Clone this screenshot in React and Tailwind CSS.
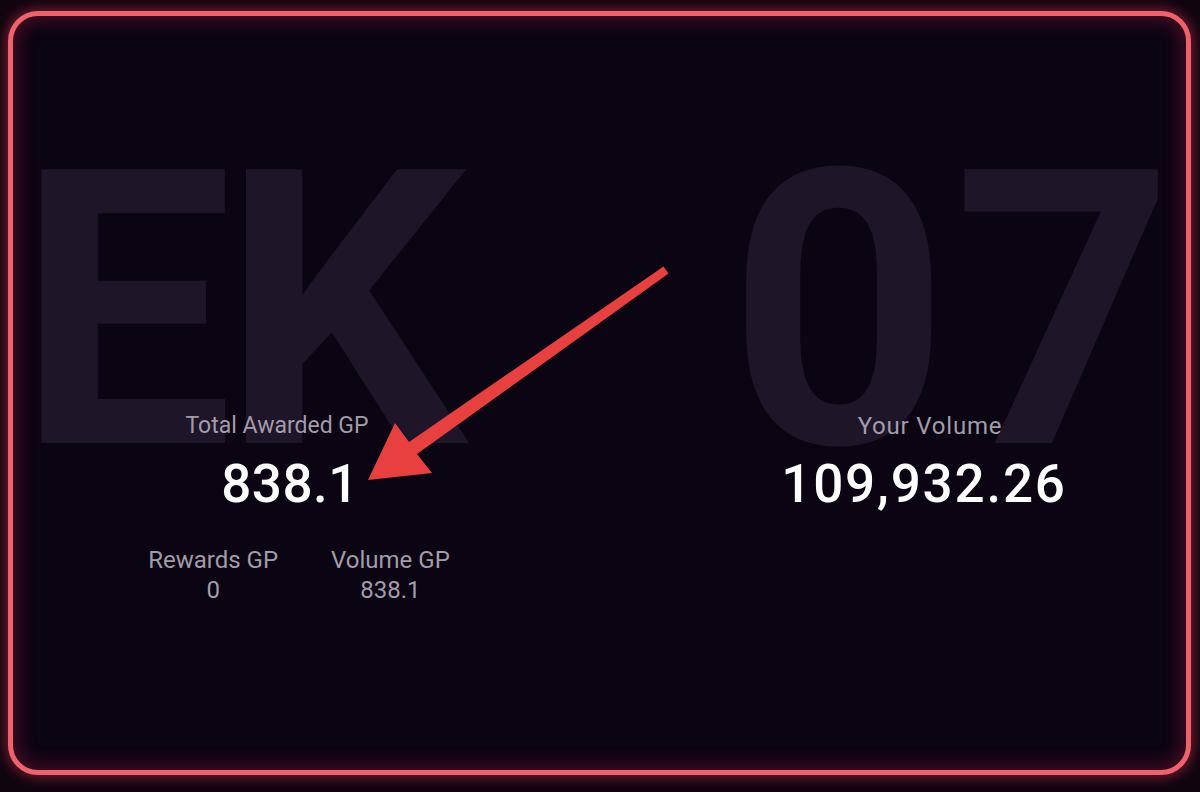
import React from 'react';

const font = { fontFamily: 'Roboto, "Liberation Sans", sans-serif' };

const Stat = ({ label, value, labelClass, valueClass }) => (
  <div className="flex flex-col items-center">
    <p className={`leading-[28px] text-[#a29ca9] ${labelClass}`}>{label}</p>
    <p className={`mt-[18px] text-[53px] leading-none font-medium text-white ${valueClass}`}>{value}</p>
  </div>
);

const SubStat = ({ label, value }) => (
  <div className="flex flex-col items-center text-[24px] leading-[30px] text-[#a29ca9]">
    <span>{label}</span>
    <span>{value}</span>
  </div>
);

// red annotation arrow pointing at the total
const Arrow = () => (
  <svg className="absolute left-0 top-0 pointer-events-none" width="1200" height="792" viewBox="0 0 1200 792">
    <polygon
      fill="#e8403f"
      points="663.5,266.5 409,442 395,423 368,480 432,473 417,454 668.5,273.5"
    />
  </svg>
);

export default function App() {
  return (
    <div className="relative w-[1200px] h-[792px] bg-[#10050f] overflow-hidden pt-[11px] pl-[8px]" style={font}>
      <div className="relative w-[1183px] h-[764px] rounded-[30px] border-[5px] border-[#f0626b] bg-[#0b0413] overflow-hidden shadow-[0_0_12px_3px_rgba(220,50,85,0.45),inset_0_0_18px_4px_rgba(190,30,70,0.35)]">
        {/* week watermark */}
        <div className="absolute left-0 right-0 top-[103px] flex justify-between pl-[4px] pr-[8px] text-[385px] leading-none font-bold text-[#1e1528] select-none">
          <span className="tracking-[-12px]">EK</span>
          <span className="tracking-[4px]">07</span>
        </div>

        <div className="relative flex pt-[396px]">
          <div className="w-[554px] flex flex-col items-center">
            <Stat label="Total Awarded GP" value="838.1" labelClass="text-[23px] mr-[26px]" valueClass="tracking-[0.5px]" />
            <div className="mt-[34px] ml-[18px] flex gap-[53px]">
              <SubStat label="Rewards GP" value="0" />
              <SubStat label="Volume GP" value="838.1" />
            </div>
          </div>
          <div className="ml-[163px] w-[400px] flex flex-col items-center">
            <Stat label="Your Volume" value="109,932.26" labelClass="text-[24px] tracking-[0.8px]" valueClass="tracking-[1.8px] mr-[12px]" />
          </div>
        </div>
      </div>
      <Arrow />
    </div>
  );
}
